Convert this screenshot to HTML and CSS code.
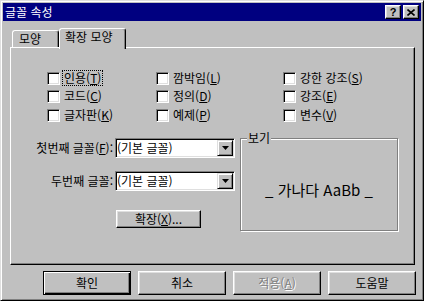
FILE: index.html
```html
<!DOCTYPE html>
<html lang="ko">
<head>
    <meta charset="UTF-8">
    <title>글꼴 속성</title>
    <link rel="stylesheet" href="styles.css">
</head>
<body>
    <div class="window">
        <div class="titlebar">
            <span class="title">글꼴 속성</span>
            <div class="cap-btns">
                <span class="cap-btn help">?</span>
                <span class="cap-btn">
                    <svg width="8" height="7" viewBox="0 0 8 7"><path d="M0.5 0.5 L7.5 6.5 M7.5 0.5 L0.5 6.5" stroke="#000" stroke-width="1.6"/></svg>
                </span>
            </div>
        </div>

        <div class="body">
            <div class="tabs">
                <div class="tab">모양</div>
                <div class="tab active">확장 모양</div>
            </div>

            <div class="panel">
                <div class="checks">
                    <div class="check"><span class="box"></span><span class="focus">인용(<u>T</u>)</span></div>
                    <div class="check"><span class="box"></span><span>깜박임(<u>L</u>)</span></div>
                    <div class="check"><span class="box"></span><span>강한 강조(<u>S</u>)</span></div>
                    <div class="check"><span class="box"></span><span>코드(<u>C</u>)</span></div>
                    <div class="check"><span class="box"></span><span>정의(<u>D</u>)</span></div>
                    <div class="check"><span class="box"></span><span>강조(<u>E</u>)</span></div>
                    <div class="check"><span class="box"></span><span>글자판(<u>K</u>)</span></div>
                    <div class="check"><span class="box"></span><span>예제(<u>P</u>)</span></div>
                    <div class="check"><span class="box"></span><span>변수(<u>V</u>)</span></div>
                </div>

                <div class="lower">
                    <div class="fonts">
                        <span class="font-label">첫번째 글꼴(<u>F</u>):</span>
                        <div class="combo">
                            <span class="combo-text">(기본 글꼴)</span>
                            <span class="drop"><svg width="7" height="4" viewBox="0 0 7 4"><path d="M0 0 H7 L3.5 4 Z" fill="#000"/></svg></span>
                        </div>
                        <span class="font-label">두번째 글꼴:</span>
                        <div class="combo">
                            <span class="combo-text">(기본 글꼴)</span>
                            <span class="drop"><svg width="7" height="4" viewBox="0 0 7 4"><path d="M0 0 H7 L3.5 4 Z" fill="#000"/></svg></span>
                        </div>
                        <button class="btn btn-more">확장(<u>X</u>)...</button>
                    </div>

                    <div class="group">
                        <span class="group-title">보기</span>
                        <div class="preview">_ 가나다 AaBb _</div>
                    </div>
                </div>
            </div>

            <div class="actions">
                <button class="btn default">확인</button>
                <button class="btn">취소</button>
                <button class="btn" disabled>적용(<u>A</u>)</button>
                <button class="btn">도움말</button>
            </div>
        </div>
    </div>
</body>
</html>
```

FILE: styles.css
```css
body {
    margin: 0;
    background: #c0c0c0;
    font-family: "Noto Sans CJK KR", "Noto Sans", sans-serif;
    font-size: 12px;
    line-height: 14px;
    color: #000;
}

.window {
    width: 424px;
    height: 301px;
    box-sizing: border-box;
    padding: 2px;
    background: #c0c0c0;
    border: 1px solid;
    border-color: #dfdfdf #000 #000 #dfdfdf;
    box-shadow: inset 1px 1px #fff, inset -1px -1px #808080;
}

.titlebar {
    height: 18px;
    padding: 0 2px;
    background: #000080;
    color: #fff;
    display: flex;
    align-items: center;
    justify-content: space-between;
}
.cap-btns { display: flex; gap: 2px; }
.cap-btn {
    width: 16px;
    height: 14px;
    box-sizing: border-box;
    display: flex;
    align-items: center;
    justify-content: center;
    background: #c0c0c0;
    color: #000;
    border: 1px solid;
    border-color: #fff #000 #000 #fff;
    box-shadow: inset -1px -1px #808080, inset 1px 1px #dfdfdf;
}
.cap-btn.help {
    font-family: "Liberation Sans", sans-serif;
    font-weight: bold;
    font-size: 11px;
}

.body { padding: 7px 0 0 7px; }

/* tabs */
.tabs {
    display: flex;
    align-items: flex-end;
    height: 19px;
    padding-left: 2px;
}
.tab {
    width: 47px;
    height: 17px;
    box-sizing: border-box;
    padding-left: 6px;
    line-height: 15px;
    border: 1px solid;
    border-bottom: 0;
    border-color: #fff #000 transparent #fff;
    border-radius: 3px 3px 0 0;
    box-shadow: inset -1px 0 #808080;
}
.tab.active {
    width: 67px;
    height: 21px;
    padding-left: 5px;
    margin-bottom: -2px;
    position: relative;
    z-index: 1;
    background: #c0c0c0;
}

.panel {
    width: 405px;
    height: 218px;
    box-sizing: border-box;
    border: 1px solid;
    border-color: #fff #000 #000 #fff;
    box-shadow: inset -1px -1px #808080;
}

/* check boxes */
.checks {
    display: grid;
    grid-template-columns: 109px 127px 120px;
    grid-template-rows: 18px 19px 19px;
    margin: 24px 0 0 36px;
}
.check {
    display: flex;
    align-items: flex-start;
    gap: 3px;
    white-space: nowrap;
}
.check span:last-child { margin-top: -1px; padding: 0 1px; }
.box {
    flex: none;
    width: 13px;
    height: 13px;
    box-sizing: border-box;
    background: #fff;
    border: 1px solid;
    border-color: #808080 #fff #fff #808080;
    box-shadow: inset 1px 1px #000, inset -1px -1px #dfdfdf;
}
.focus { outline: 1px dotted #000; }

/* font pickers */
.lower { display: flex; margin-top: 3px; }
.fonts {
    display: grid;
    grid-template-columns: 102px 120px;
    column-gap: 2px;
    row-gap: 13px;
    align-items: center;
    align-content: start;
    padding-top: 7px;
}
.font-label { text-align: right; white-space: nowrap; }
.combo {
    height: 20px;
    box-sizing: border-box;
    background: #fff;
    display: flex;
    align-items: center;
    justify-content: space-between;
    border: 1px solid;
    border-color: #808080 #fff #fff #808080;
    box-shadow: inset 1px 1px #000, inset -1px -1px #dfdfdf;
}
.combo-text { padding-left: 1px; }
.drop {
    width: 16px;
    height: 16px;
    margin-right: 1px;
    box-sizing: border-box;
    display: flex;
    align-items: center;
    justify-content: center;
    background: #c0c0c0;
    border: 1px solid;
    border-color: #dfdfdf #000 #000 #dfdfdf;
    box-shadow: inset 1px 1px #fff, inset -1px -1px #808080;
}

/* preview group */
.group {
    width: 158px;
    height: 93px;
    margin: 7px 0 0 5px;
    box-sizing: border-box;
    display: flex;
    flex-direction: column;
    border: 1px solid #808080;
    box-shadow: inset 1px 1px #fff, 1px 1px #fff;
}
.group-title {
    align-self: flex-start;
    margin: -8px 0 0 6px;
    padding: 0 1px;
    background: #c0c0c0;
}
.preview {
    flex: 1;
    display: flex;
    align-items: center;
    justify-content: center;
    padding-top: 4px;
    font-size: 15px;
    white-space: pre;
}

/* buttons */
.btn {
    width: 88px;
    height: 24px;
    padding: 0;
    box-sizing: border-box;
    font: inherit;
    color: #000;
    background: #c0c0c0;
    border: 1px solid;
    border-color: #fff #000 #000 #fff;
    box-shadow: inset -1px -1px #808080, inset 1px 1px #dfdfdf;
}
.btn.default {
    border-color: #000;
    box-shadow: inset 1px 1px #fff, inset -1px -1px #000, inset -2px -2px #808080;
}
.btn:disabled { color: #808080; text-shadow: 1px 1px #fff; }
.btn-more {
    grid-column: 2;
    justify-self: start;
    width: 85px;
    height: 18px;
    margin: 6px 0 0 1px;
}

.actions {
    display: flex;
    gap: 7px;
    margin: 6px 0 0 33px;
}
```
